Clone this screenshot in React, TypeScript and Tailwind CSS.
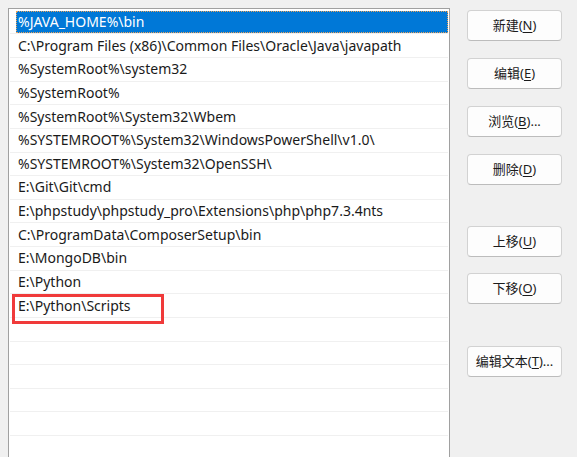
import React from "react";

const paths = [
  "%JAVA_HOME%\\bin",
  "C:\\Program Files (x86)\\Common Files\\Oracle\\Java\\javapath",
  "%SystemRoot%\\system32",
  "%SystemRoot%",
  "%SystemRoot%\\System32\\Wbem",
  "%SYSTEMROOT%\\System32\\WindowsPowerShell\\v1.0\\",
  "%SYSTEMROOT%\\System32\\OpenSSH\\",
  "E:\\Git\\Git\\cmd",
  "E:\\phpstudy\\phpstudy_pro\\Extensions\\php\\php7.3.4nts",
  "C:\\ProgramData\\ComposerSetup\\bin",
  "E:\\MongoDB\\bin",
  "E:\\Python",
  "E:\\Python\\Scripts",
];

const rows = [...paths, ...Array(7).fill("")];

function Btn({ label, mn, tail = "", className = "" }: { label: string; mn: string; tail?: string; className?: string }) {
  return (
    <button
      className={
        "flex h-[31px] w-[95px] items-center justify-center rounded-[4px] border border-[#d2d2d2] border-b-[#bcbcbc] bg-[#fdfdfd] text-[13px] text-[#1b1b1b] " +
        className
      }
    >
      {label}(<span className="underline underline-offset-2">{mn}</span>){tail}
    </button>
  );
}

export default function App() {
  return (
    <div
      className="flex h-[457px] w-[577px] overflow-hidden bg-[#f0f0f0]"
      style={{ fontFamily: '"Noto Sans", "Noto Sans CJK SC", sans-serif' }}
    >
      <div className="relative ml-[8px] mt-[8px] w-[442px] shrink-0 border border-b-0 border-[#a0a0a0] bg-white pt-[1.75px] pr-[1px] pl-[1px]">
        {rows.map((p, i) => (
          <div key={i} className="h-[23.625px] border-b border-[#f0f0f0] pl-[6px]">
            <div
              className={
                "flex h-full items-center px-[2px] text-[14px] leading-none " +
                (i === 0 ? "bg-[#0078d7] text-white outline outline-1 outline-dotted outline-[#e9a25a] -outline-offset-1" : "text-[#1a1a1a]")
              }
            >
              {p}
            </div>
          </div>
        ))}
        <div className="absolute left-[3px] top-[284.5px] h-[30.5px] w-[152px] border-[3px] border-[#f03a3a]" />
      </div>
      <div className="ml-[17px] mt-[10px] flex flex-col">
        <Btn label="新建" mn="N" />
        <Btn label="编辑" mn="E" className="mt-[17px]" />
        <Btn label="浏览" mn="B" tail="..." className="mt-[17px]" />
        <Btn label="删除" mn="D" className="mt-[17px]" />
        <Btn label="上移" mn="U" className="mt-[41px]" />
        <Btn label="下移" mn="O" className="mt-[16px]" />
        <Btn label="编辑文本" mn="T" tail="..." className="mt-[42px]" />
      </div>
    </div>
  );
}
